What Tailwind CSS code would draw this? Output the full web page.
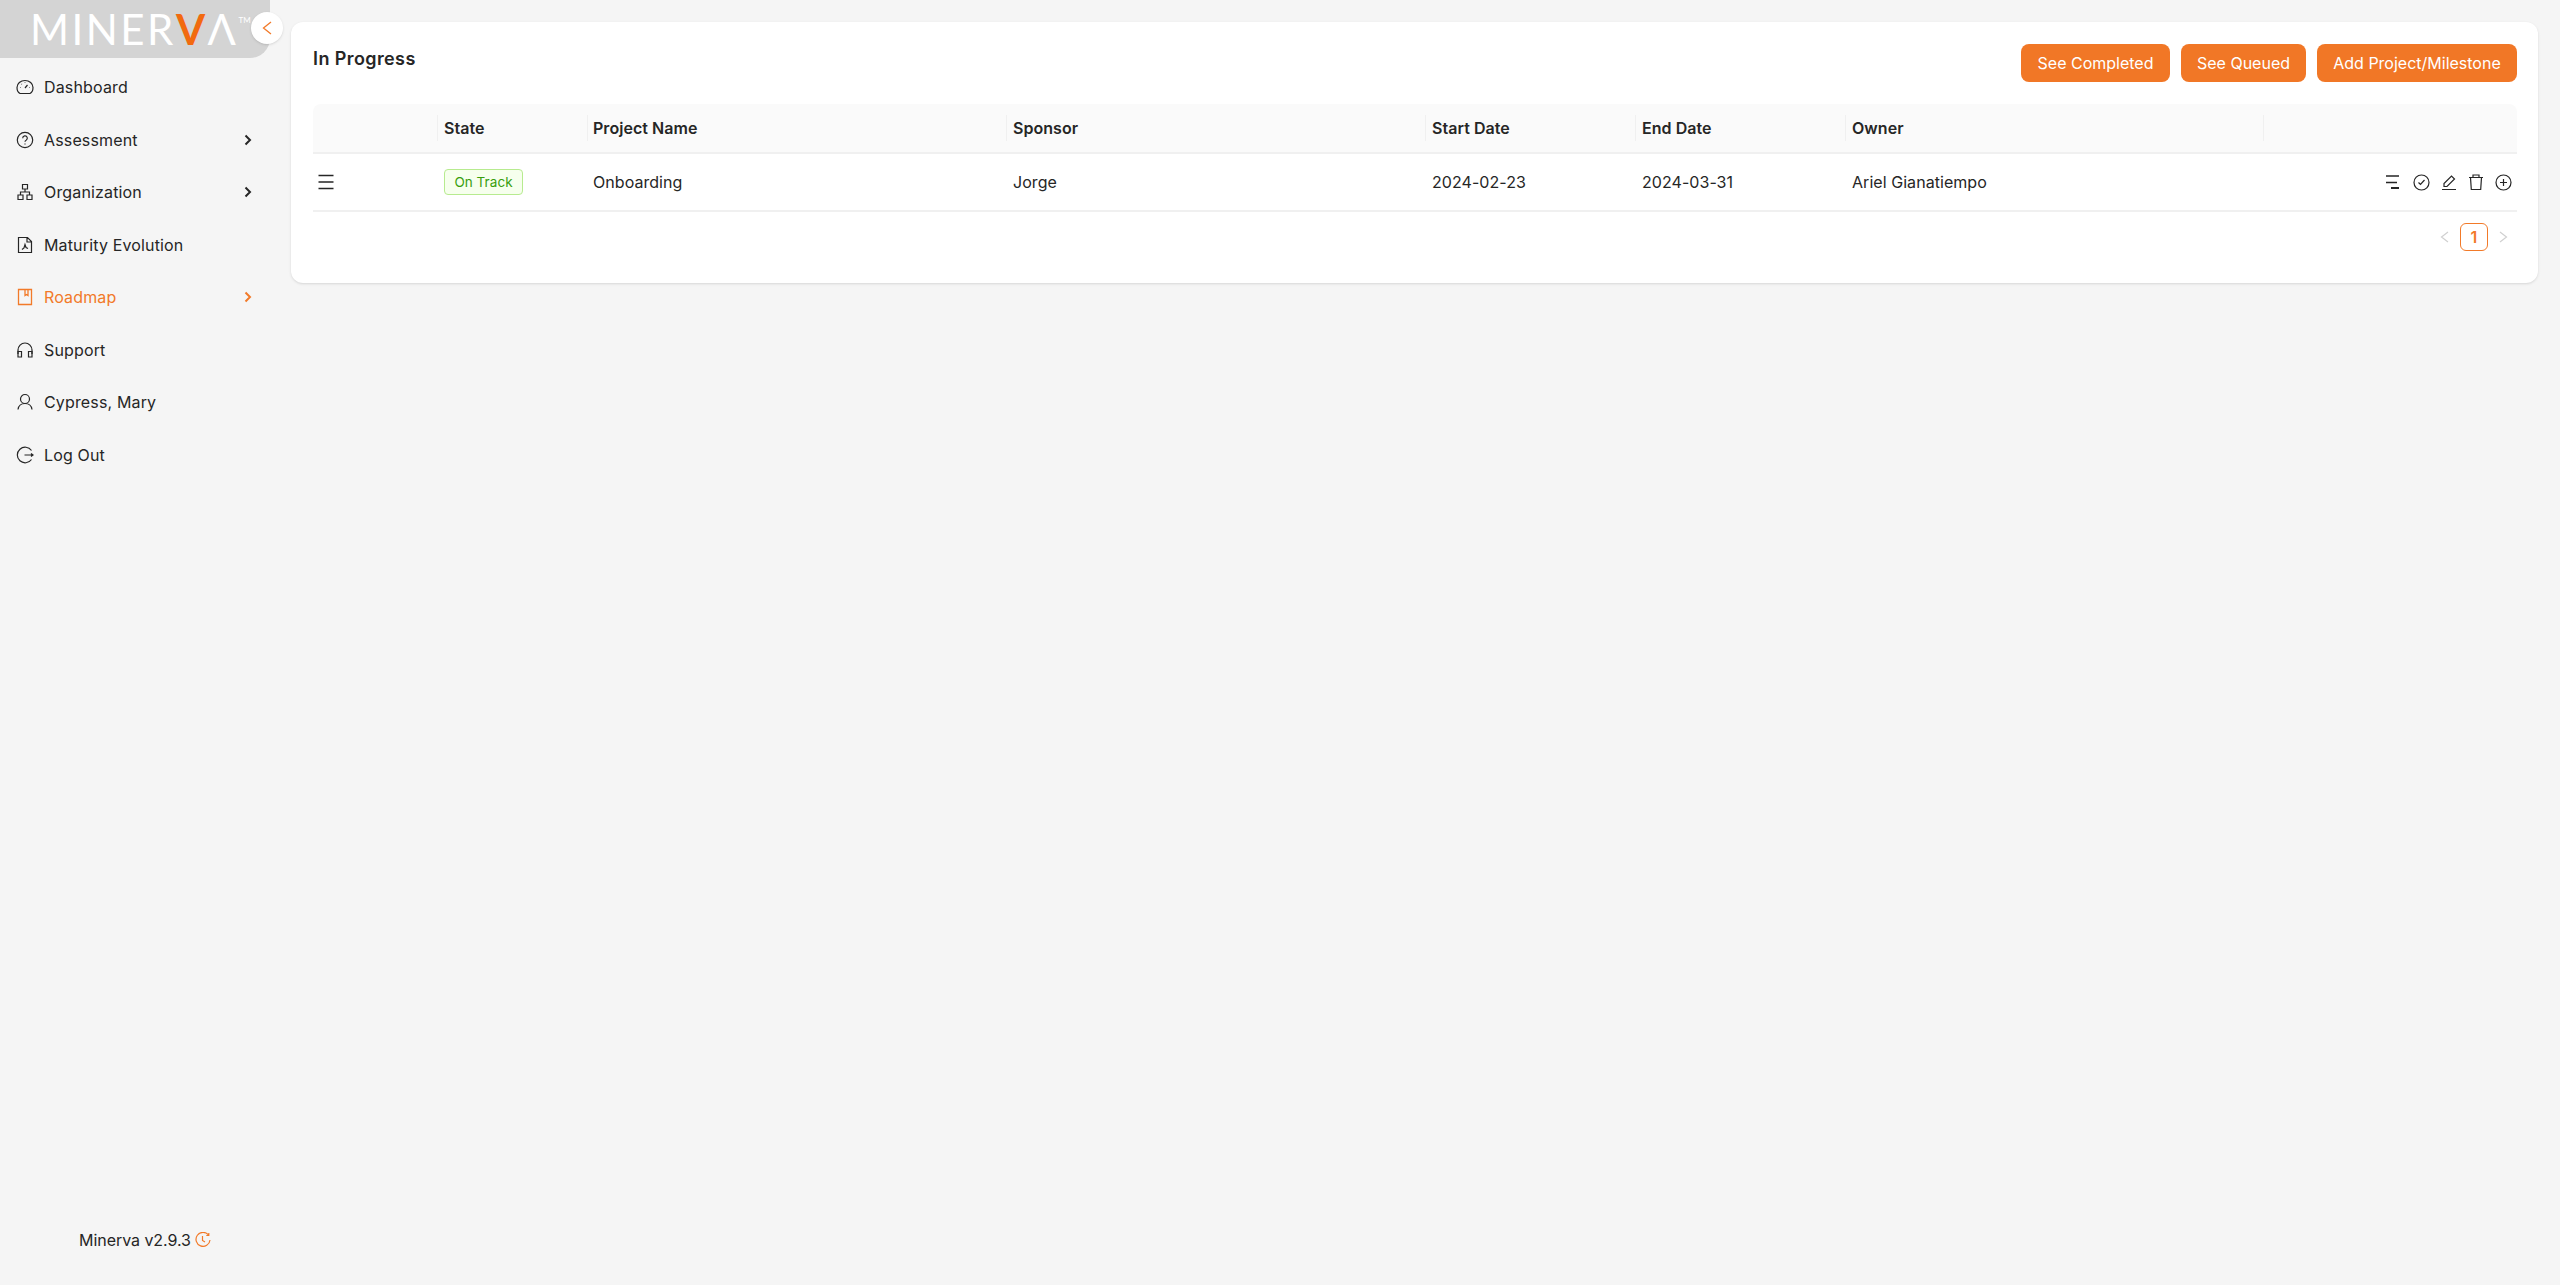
<!DOCTYPE html>
<html>
<head>
<meta charset="utf-8">
<script src="https://cdn.jsdelivr.net/npm/@tailwindcss/browser@4"></script>
</head>
<body class="bg-[#f5f5f5] font-['Inter',sans-serif] text-[#262626]">
<div class="flex h-[1285px] w-[2560px] overflow-hidden">
  <aside class="relative flex w-[270px] shrink-0 flex-col">
    <div class="flex h-[58px] w-[270px] items-start rounded-br-[20px] bg-[#d4d4d4] pl-[30px] pt-[5px] font-['Lato',sans-serif] text-[42px] leading-[48px] font-normal tracking-[2.5px] text-white">
      <span>MINER</span><span class="font-bold text-[#f26a0f]">V</span><span>Λ</span><span class="mt-[10px] text-[8px] leading-[10px] tracking-normal">TM</span>
    </div>
    <button class="absolute left-[251px] top-[12px] flex h-[32px] w-[32px] items-center justify-center rounded-full bg-white shadow-sm">
      <svg width="12" height="16" viewBox="0 0 12 16" fill="none" stroke="#f27a29" stroke-width="1.3"><path d="M10 2 2.5 8l7.5 6"/></svg>
    </button>
    <nav class="mt-[3px] flex flex-col text-[16px] leading-[24px] tracking-[0.15px]">
      <a class="flex h-[52.5px] items-center pl-[16px]">
        <svg class="mr-[10px]" width="18" height="18" viewBox="0 0 18 18" fill="none" stroke="#262626" stroke-width="1.2"><path d="M4 15.5C2 14.5 1 12 1 9.500a8 7 0 0 1 16 0c0 2.500-1 5-3 6z"/><path d="m9 10 2.500-3M4 9.500h.5M5.500 6l.3.3M9 4.500V5M13.500 9.500h.5"/></svg>Dashboard
      </a>
      <a class="flex h-[52.5px] items-center pl-[16px]">
        <svg class="mr-[10px]" width="18" height="18" viewBox="0 0 18 18" fill="none" stroke="#262626" stroke-width="1.2"><circle cx="9" cy="9" r="7.700"/><path d="M6.700 7.200a2.300 2.300 0 1 1 3.400 2c-.8.400-1.100.8-1.100 1.600M9 12.500v1"/></svg>Assessment
        <svg class="ml-auto mr-[18px]" width="8" height="12" viewBox="0 0 8 12" fill="none" stroke="#262626" stroke-width="2"><path d="m1.500 1.500 4.500 4.500-4.500 4.500"/></svg>
      </a>
      <a class="flex h-[52.5px] items-center pl-[16px]">
        <svg class="mr-[10px]" width="18" height="18" viewBox="0 0 18 18" fill="none" stroke="#262626" stroke-width="1.2"><path d="M6.500 1.500h5v4.500h-5zM2 12h5v4.500H2zM11 12h5v4.500h-5zM9 6v3M4.500 12V9h9v3"/></svg>Organization
        <svg class="ml-auto mr-[18px]" width="8" height="12" viewBox="0 0 8 12" fill="none" stroke="#262626" stroke-width="2"><path d="m1.500 1.500 4.500 4.500-4.500 4.500"/></svg>
      </a>
      <a class="flex h-[52.5px] items-center pl-[16px]">
        <svg class="mr-[10px]" width="18" height="18" viewBox="0 0 18 18" fill="none" stroke="#262626" stroke-width="1.2"><path d="M2.500 1.500h9l4 4v11h-13zM11 1.500V6h4.500M6 13.500l2-1.500 1-3.500 1 3 2 1"/></svg>Maturity Evolution
      </a>
      <a class="flex h-[52.5px] items-center pl-[16px] text-[#f27a29]">
        <svg class="mr-[10px]" width="18" height="18" viewBox="0 0 18 18" fill="none" stroke="#f27a29" stroke-width="1.300"><path d="M2.500 1.500h13v15h-13zM9 1.500v6l1.500-1 1.500 1v-6"/></svg>Roadmap
        <svg class="ml-auto mr-[18px]" width="8" height="12" viewBox="0 0 8 12" fill="none" stroke="#f27a29" stroke-width="2"><path d="m1.500 1.500 4.500 4.500-4.500 4.500"/></svg>
      </a>
      <a class="flex h-[52.5px] items-center pl-[16px]">
        <svg class="mr-[10px]" width="18" height="18" viewBox="0 0 18 18" fill="none" stroke="#262626" stroke-width="1.200"><path d="M2 13V9a7 7 0 0 1 14 0v4"/><path d="M2 10.500h3.500v5.500H2zM12.500 10.500H16v5.500h-3.500z"/></svg>Support
      </a>
      <a class="flex h-[52.5px] items-center pl-[16px]">
        <svg class="mr-[10px]" width="18" height="18" viewBox="0 0 18 18" fill="none" stroke="#262626" stroke-width="1.200"><circle cx="9" cy="6" r="4.500"/><path d="M2 16.500c.5-3.500 3-6 7-6s6.500 2.500 7 6"/></svg>Cypress, Mary
      </a>
      <a class="flex h-[52.5px] items-center pl-[16px]">
        <svg class="mr-[10px]" width="18" height="18" viewBox="0 0 18 18" fill="none" stroke="#262626" stroke-width="1.200"><path d="M15.500 4.500a7.800 7.800 0 1 0 0 9M8.500 9h8.500M15 7.500 17 9l-2 1.500"/></svg>Log Out
      </a>
    </nav>
    <div class="mt-auto mb-[33px] flex items-center pl-[79px] text-[16px] leading-[24px] tracking-[-0.05px]">
      Minerva v2.9.3
      <svg class="ml-[4px]" width="16" height="16" viewBox="0 0 16 16" fill="none" stroke="#f27a29" stroke-width="1.200"><path d="M13.500 3A7 7 0 1 0 15 8M13.800 1v2.500h-2.500M7.500 4v4.500l2.500 1.500"/></svg>
    </div>
  </aside>
  <main class="flex-1 pl-[21px] pr-[22px] pt-[22px]">
    <section class="h-[261px] rounded-[12px] bg-white pl-[22px] pr-[21px] pt-[22px] shadow-sm">
      <div class="flex h-[60px] items-start justify-between">
        <h2 class="mt-[1px] text-[18px] leading-[28px] font-semibold tracking-[0.4px]">In Progress</h2>
        <div class="flex gap-[11px] text-[16px] leading-[24px] text-white">
          <button class="h-[38px] w-[149px] rounded-[8px] bg-[#f17726]">See Completed</button>
          <button class="h-[38px] w-[125px] rounded-[8px] bg-[#f17726]">See Queued</button>
          <button class="h-[38px] w-[200px] rounded-[8px] bg-[#f17726]">Add Project/Milestone</button>
        </div>
      </div>
      <table class="w-full table-fixed border-collapse text-left text-[16px] tracking-[0.05px]">
        <colgroup>
          <col class="w-[125px]"><col class="w-[150px]"><col class="w-[419px]"><col class="w-[419px]"><col class="w-[210px]"><col class="w-[210px]"><col class="w-[418px]"><col class="w-[253px]">
        </colgroup>
        <thead>
          <tr class="h-[49px] border-b-2 border-[#f0f0f0] bg-[#fafafa] font-semibold">
            <th class="rounded-tl-[8px] font-semibold"><div class="flex h-[26px] items-center border-r border-[#f0f0f0]"></div></th>
            <th class="font-semibold"><div class="flex h-[26px] items-center border-r border-[#f0f0f0] pl-[6px]">State</div></th>
            <th class="font-semibold"><div class="flex h-[26px] items-center border-r border-[#f0f0f0] pl-[5px]">Project Name</div></th>
            <th class="font-semibold"><div class="flex h-[26px] items-center border-r border-[#f0f0f0] pl-[6px]">Sponsor</div></th>
            <th class="font-semibold"><div class="flex h-[26px] items-center border-r border-[#f0f0f0] pl-[6px]">Start Date</div></th>
            <th class="font-semibold"><div class="flex h-[26px] items-center border-r border-[#f0f0f0] pl-[6px]">End Date</div></th>
            <th class="font-semibold"><div class="flex h-[26px] items-center border-r border-[#f0f0f0] pl-[6px]">Owner</div></th>
            <th class="rounded-tr-[8px]"></th>
          </tr>
        </thead>
        <tbody>
          <tr class="h-[58px] border-b-2 border-[#f0f0f0]">
            <td class="pl-[4px]"><svg width="18" height="18" viewBox="0 0 18 18" fill="none" stroke="#262626" stroke-width="1.300"><path d="M1.500 2.500h15M1.500 9h15M1.500 15.500h15"/></svg></td>
            <td class="pl-[6px]"><span class="inline-flex h-[26px] w-[79px] items-center justify-center rounded-[4px] border border-[#b7eb8f] bg-[#f6ffed] text-[13.500px] text-[#389e0d]">On Track</span></td>
            <td class="pl-[5px]">Onboarding</td>
            <td class="pl-[6px]">Jorge</td>
            <td class="pl-[6px]">2024-02-23</td>
            <td class="pl-[6px]">2024-03-31</td>
            <td class="pl-[6px]">Ariel Gianatiempo</td>
            <td>
              <div class="flex items-center justify-end gap-[11px] pr-[5px]">
                <svg class="mr-[2px]" width="15" height="16" viewBox="0 0 15 16" fill="none" stroke="#262626"><path stroke-width="1.500" d="M1 2h13M1 8.500h11"/><path stroke-width="2" d="M6 14h8"/></svg>
                <svg width="17" height="17" viewBox="0 0 17 17" fill="none" stroke="#262626" stroke-width="1.200"><circle cx="8.500" cy="8.500" r="7.500"/><path d="m5.500 8.500 2 2 4-4.500"/></svg>
                <svg width="16" height="16" viewBox="0 0 16 16" fill="none" stroke="#262626" stroke-width="1.200"><path d="M1 15.500h14M3 12.500V9.500L10.500 2l3 3-7.500 7.500z"/></svg>
                <svg width="16" height="16" viewBox="0 0 16 16" fill="none" stroke="#262626" stroke-width="1.200"><path d="M1 3.500h14M5 3.500v-2.500h6v2.500M2.500 3.500l.8 12h9.400l.8-12"/></svg>
                <svg width="17" height="17" viewBox="0 0 17 17" fill="none" stroke="#262626" stroke-width="1.200"><circle cx="8.500" cy="8.500" r="7.500"/><path d="M5 8.500h7M8.500 5v7"/></svg>
              </div>
            </td>
          </tr>
        </tbody>
      </table>
      <div class="mt-[11px] flex items-center justify-end gap-[6px] pr-[9px]">
        <svg width="10" height="12" viewBox="0 0 10 12" fill="none" stroke="#d0d0d0" stroke-width="1.200"><path d="M8 1 1.500 6 8 11"/></svg>
        <span class="ml-[4px] flex h-[28px] w-[28px] items-center justify-center rounded-[6px] border-[1.5px] border-[#f27a29] text-[16px] font-semibold text-[#f27a29]">1</span>
        <svg class="ml-[4px]" width="10" height="12" viewBox="0 0 10 12" fill="none" stroke="#d0d0d0" stroke-width="1.200"><path d="M2 1l6.500 5L2 11"/></svg>
      </div>
    </section>
  </main>
</div>
</body>
</html>
